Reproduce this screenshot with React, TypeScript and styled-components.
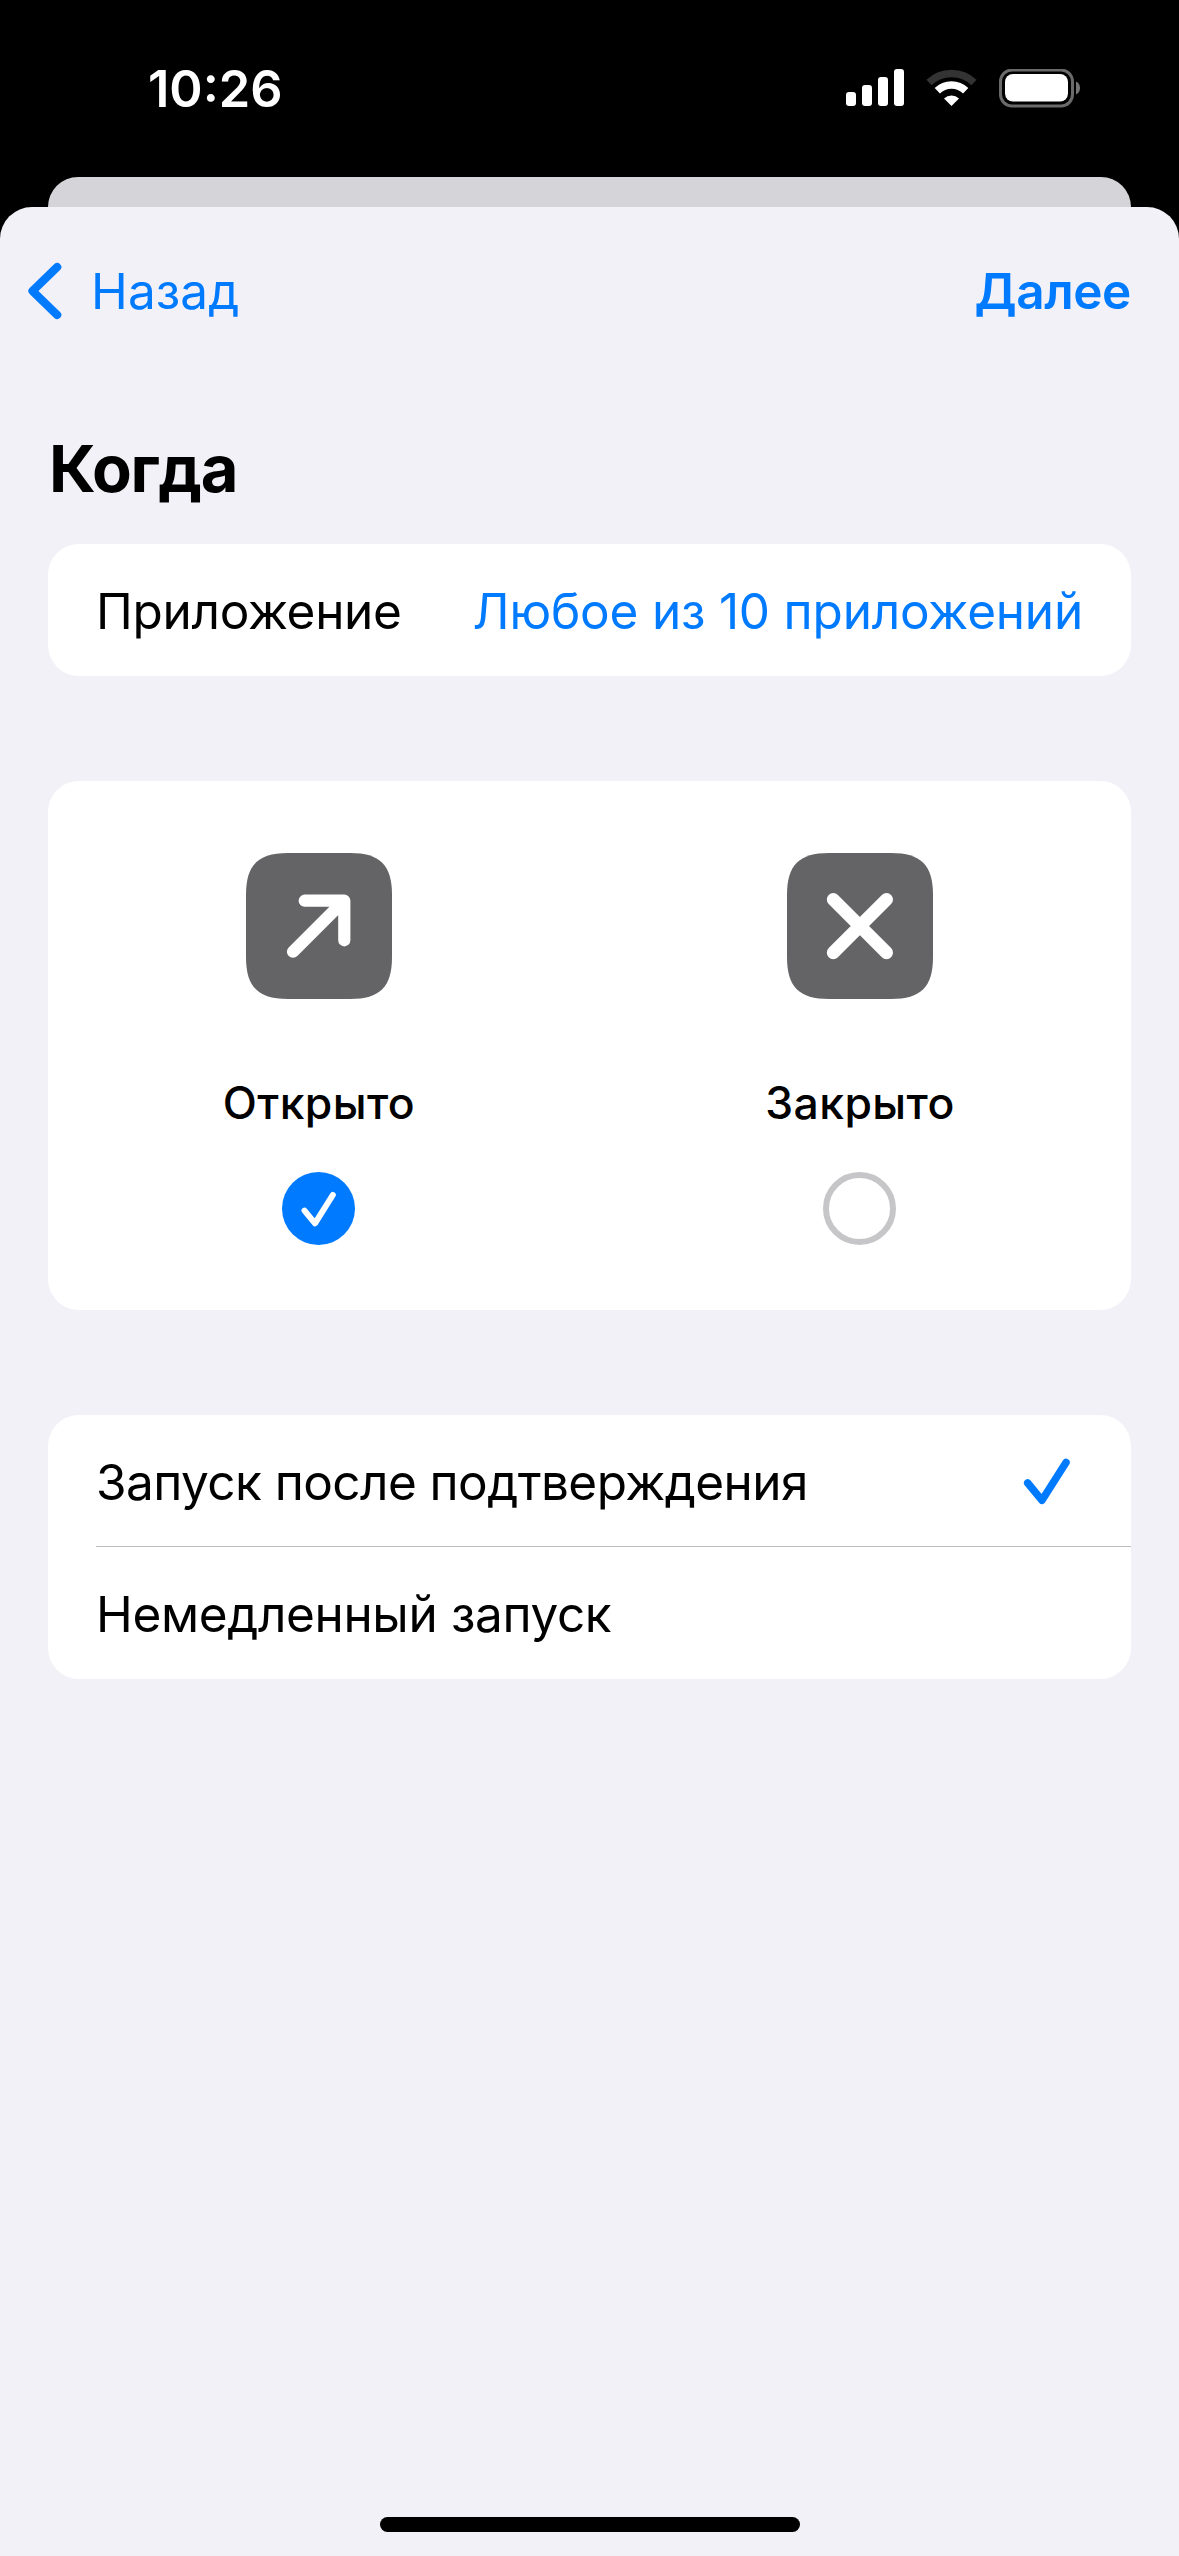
import React from 'react';
import styled, { createGlobalStyle } from 'styled-components';

const BLUE = '#007aff';

const GlobalStyle = createGlobalStyle`
  * { box-sizing: border-box; }
  html, body { margin: 0; padding: 0; background: #000; }
  body { font-family: Inter, "Liberation Sans", sans-serif; }
`;

const Screen = styled.div`
  width: 1179px;
  height: 2556px;
  display: flex;
  flex-direction: column;
  background: #000;
  overflow: hidden;
`;

const StatusBar = styled.header`
  height: 177px;
  padding: 69px 98px 0 148px;
  display: flex;
  justify-content: space-between;
  align-items: flex-start;
`;

const Label = styled.span<{ $size?: number; $weight?: number; $spacing?: number; $color?: string }>`
  display: block;
  white-space: nowrap;
  font-size: ${(p) => p.$size ?? 49.5}px;
  font-weight: ${(p) => p.$weight ?? 400};
  letter-spacing: ${(p) => p.$spacing ?? 0}px;
  color: ${(p) => p.$color ?? '#000'};
  line-height: 1.2;
`;

const Clock = styled(Label)`
  line-height: 39px;
`;

const StatusIcons = styled.div`
  display: flex;
  align-items: flex-start;
  gap: 22px;
  svg { display: block; }
`;

const BackSheet = styled.div`
  height: 30px;
  margin: 0 48px;
  flex: none;
  background: #d5d4d9;
  border-radius: 30px 30px 0 0;
`;

const Sheet = styled.main`
  flex: 1;
  display: flex;
  flex-direction: column;
  background: #f2f1f7;
  border-radius: 32px 32px 0 0;
`;

const NavBar = styled.nav`
  height: 168px;
  flex: none;
  padding: 0 48px 0 26px;
  display: flex;
  justify-content: space-between;
  align-items: center;
`;

const NavLabel = styled(Label)`
  padding-top: 2px;
`;

const BackButton = styled.div`
  display: flex;
  align-items: center;
  gap: 25px;
  svg { display: block; }
`;

const Content = styled.div`
  flex: 1;
  padding: 0 48px;
  display: flex;
  flex-direction: column;
`;

const Heading = styled.h1`
  margin: 0;
  height: 169px;
  padding: 55px 0 0 1px;
  line-height: 80px;
`;

const Card = styled.section`
  flex: none;
  background: #fff;
  border-radius: 31px;
  margin-bottom: 105px;
`;

const Row = styled.div<{ $divider?: boolean }>`
  height: 132px;
  margin-left: 48px;
  padding: 4px 48px 0 0;
  display: flex;
  align-items: center;
  justify-content: space-between;
  border-bottom: ${(p) => (p.$divider ? '1px solid #bdbdc1' : 'none')};
  svg { display: block; margin-bottom: 4px; }
`;

const Choices = styled(Card)`
  height: 529px;
  padding-right: 1px;
  display: grid;
  grid-template-columns: 542px 540px;
`;

const Choice = styled.div`
  display: flex;
  flex-direction: column;
  align-items: center;
  padding-top: 72px;
`;

const Tile = styled.svg`
  display: block;
  width: 146px;
  height: 146px;
`;

const ChoiceLabel = styled(Label)`
  margin: 77px 0 42px;
  line-height: 54px;
`;

const Radio = styled.div<{ $checked?: boolean }>`
  width: 73px;
  height: 73px;
  margin-left: -1px;
  border-radius: 50%;
  background: ${(p) => (p.$checked ? BLUE : 'transparent')};
  border: ${(p) => (p.$checked ? 'none' : '6px solid #c6c6c9')};
  svg { display: block; }
`;

const HomeIndicator = styled.div`
  width: 420px;
  height: 15px;
  flex: none;
  margin: 0 auto 24px;
  border-radius: 8px;
  background: #000;
`;

const Signal = () => (
  <svg width="58" height="38" viewBox="0 0 58 38" fill="#fff">
    <rect x="0" y="23" width="10" height="14" rx="3" />
    <rect x="16" y="16" width="10" height="21" rx="3" />
    <rect x="32" y="8" width="10" height="29" rx="3" />
    <rect x="48" y="0" width="10" height="37" rx="3" />
  </svg>
);

const Wifi = () => (
  <svg width="51" height="38" viewBox="0 0 51 38" fill="none">
    <path d="M3 13.5 A32.5 32.5 0 0 1 48 13.5" stroke="#333" strokeWidth="7.5" />
    <path d="M11.3 21.8 A20.4 20.4 0 0 1 39.7 21.8" stroke="#fff" strokeWidth="7.5" />
    <path d="M25.5 37 L18 29.5 A10.8 10.8 0 0 1 33 29.5 Z" fill="#fff" />
  </svg>
);

const Battery = () => (
  <svg width="82" height="40" viewBox="0 0 82 40" fill="none">
    <rect x="1.5" y="1" width="72" height="36" rx="11.5" stroke="#6a6a6a" strokeWidth="3" />
    <rect x="6" y="5" width="63" height="27.5" rx="8" fill="#fff" />
    <path d="M77 12.5 C79.5 13.5 81 16 81 19 C81 22 79.5 24.500 77 25.500 Z" fill="#757575" />
  </svg>
);

const squircle =
  'M42 0 H104 C134 0 146 12 146 42 V104 C146 134 134 146 104 146 H42 C12 146 0 134 0 104 V42 C0 12 12 0 42 0 Z';

export default function App() {
  return (
    <>
      <GlobalStyle />
      <Screen>
        <StatusBar>
          <Clock $weight={600} $color="#fff" $size={50.5}>10:26</Clock>
          <StatusIcons>
            <Signal />
            <Wifi />
            <Battery />
          </StatusIcons>
        </StatusBar>
        <BackSheet />
        <Sheet>
          <NavBar>
            <BackButton>
              <svg width="40" height="60" viewBox="0 0 40 60" fill="none">
                <path d="M31.200 6 L6.500 30 L31.200 54" stroke={BLUE} strokeWidth="8.200" strokeLinecap="round" strokeLinejoin="round" />
              </svg>
              <NavLabel $color={BLUE} $spacing={0.1}>Назад</NavLabel>
            </BackButton>
            <NavLabel $color={BLUE} $weight={600} $spacing={-0.4}>Далее</NavLabel>
          </NavBar>
          <Content>
            <Heading>
              <Label as="span" $size={65} $weight={700} $spacing={-1.3}>Когда</Label>
            </Heading>
            <Card>
              <Row>
                <Label $spacing={-0.3}>Приложение</Label>
                <Label $color={BLUE} $spacing={-0.2}>Любое из 10 приложений</Label>
              </Row>
            </Card>
            <Choices>
              <Choice>
                <Tile viewBox="0 0 146 146" fill="none">
                  <path d={squircle} fill="#646466" />
                  <path d="M47 98.700 L97 48.700 M58.700 47.700 H98.300 V87.300" stroke="#fff" strokeWidth="12.200" strokeLinecap="round" strokeLinejoin="round" />
                </Tile>
                <ChoiceLabel $size={44.5} $weight={500} $spacing={0.4}>Открыто</ChoiceLabel>
                <Radio $checked>
                  <svg width="73" height="73" viewBox="0 0 73 73" fill="none">
                    <path d="M22.500 38.600 L33 51.300 L50.800 23" stroke="#fff" strokeWidth="6" strokeLinecap="round" strokeLinejoin="round" />
                  </svg>
                </Radio>
              </Choice>
              <Choice>
                <Tile viewBox="0 0 146 146" fill="none">
                  <path d={squircle} fill="#646466" />
                  <path d="M46.300 46.500 L99.500 99.700 M99.500 46.500 L46.300 99.700" stroke="#fff" strokeWidth="13" strokeLinecap="round" />
                </Tile>
                <ChoiceLabel $size={44.5} $weight={500} $spacing={0.4}>Закрыто</ChoiceLabel>
                <Radio />
              </Choice>
            </Choices>
            <Card>
              <Row $divider>
                <Label $spacing={-0.57}>Запуск после подтверждения</Label>
                <svg width="60" height="48" viewBox="0 0 60 48" fill="none">
                  <path d="M4.700 26 L19 43.300 L43 5.500" stroke={BLUE} strokeWidth="7.500" strokeLinecap="round" strokeLinejoin="round" />
                </svg>
              </Row>
              <Row>
                <Label $spacing={-0.36}>Немедленный запуск</Label>
              </Row>
            </Card>
          </Content>
          <HomeIndicator />
        </Sheet>
      </Screen>
    </>
  );
}
